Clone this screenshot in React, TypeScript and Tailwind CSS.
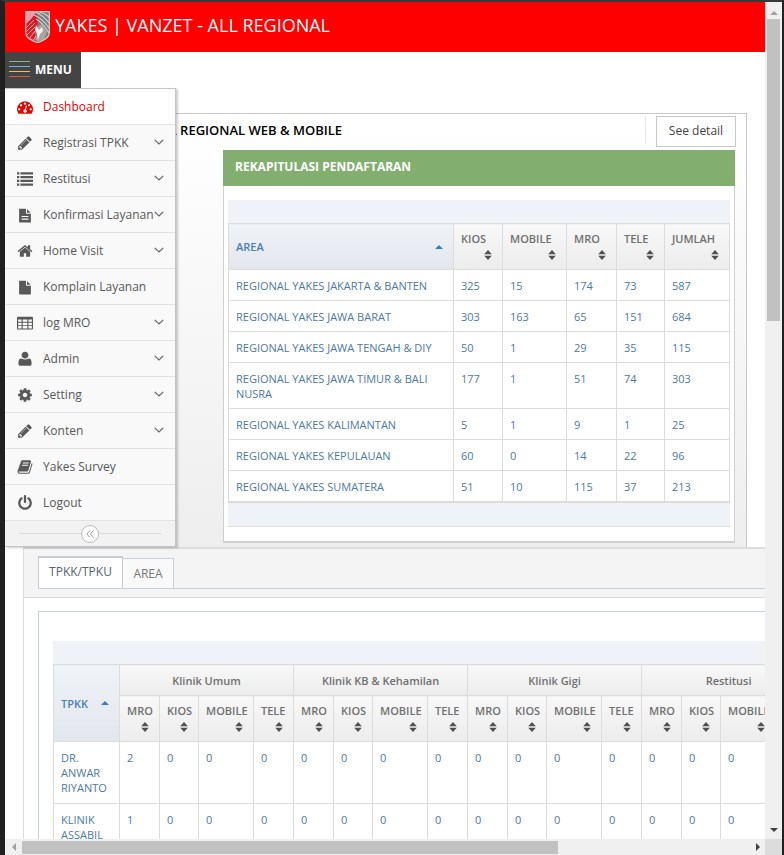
import React from 'react';

const FILE_PATH =
  'M1596 476q14 14 28 36h-472v-472q22 14 36 28zm-572 164h640v1056q0 40-28 68t-68 28h-1344q-40 0-68-28t-28-68v-1600q0-40 28-68t68-28h800v544q0 40 28 68t68 28z';

const ICONS: Record<string, React.ReactNode> = {
  dashboard: (
    <path d="M384 1152q0-53-37.5-90.5t-90.5-37.5-90.5 37.5-37.5 90.5 37.5 90.5 90.5 37.5 90.5-37.5 37.5-90.5zm192-448q0-53-37.5-90.5t-90.5-37.5-90.5 37.5-37.5 90.5 37.5 90.5 90.5 37.5 90.5-37.5 37.5-90.5zm428 481l101-382q6-26-7.5-48.5t-38.5-29.5-48 6.5-30 39.5l-101 382q-60 5-107 43.5t-63 98.5q-20 77 20 146t117 89 146-20 89-117q16-60-6-117t-72-91zm660-33q0-53-37.5-90.5t-90.5-37.5-90.5 37.5-37.5 90.5 37.5 90.5 90.5 37.5 90.5-37.5 37.5-90.5zm-640-640q0-53-37.5-90.5t-90.5-37.5-90.5 37.5-37.5 90.5 37.5 90.5 90.5 37.5 90.5-37.5 37.5-90.5zm448 192q0-53-37.5-90.5t-90.5-37.5-90.5 37.5-37.5 90.5 37.5 90.5 90.5 37.5 90.5-37.5 37.5-90.5zm320 448q0 261-141 483-19 29-54 29h-1402q-35 0-54-29-141-221-141-483 0-182 71-348t191-286 286-191 348-71 348 71 286 191 191 286 71 348z" />
  ),
  pencil: (
    <path d="M491 1536l91-91-235-235-91 91v107h128v128h107zm523-928q0-22-22-22-10 0-17 7l-542 542q-7 7-7 17 0 22 22 22 10 0 17-7l542-542q7-7 7-17zm-54-192l416 416-832 832h-416v-416zm683 96q0 53-37 90l-166 166-416-416 166-165q36-38 90-38 53 0 91 38l235 234q37 39 37 91z" />
  ),
  list: (
    <path d="M0 150h256v240h-256zM384 150h1408v240h-1408zM0 570h256v240h-256zM384 570h1408v240h-1408zM0 990h256v240h-256zM384 990h1408v240h-1408zM0 1410h256v240h-256zM384 1410h1408v240h-1408z" />
  ),
  fileText: (
    <path
      fillRule="evenodd"
      transform="translate(125 200) scale(.86)"
      d={FILE_PATH + 'M448 928h896v150h-896zM448 1264h896v150h-896z'}
    />
  ),
  home: (
    <path d="M1472 992v480q0 26-19 45t-45 19h-384v-384h-256v384h-384q-26 0-45-19t-19-45v-480q0-1 .5-3t.5-3l575-474 575 474q1 2 1 6zm223-69l-62 74q-8 9-21 11h-3q-13 0-21-7l-692-577-692 577q-12 8-24 7-13-2-21-11l-62-74q-8-10-7-23.5t11-21.5l719-599q32-26 76-26t76 26l244 204v-195q0-14 9-23t23-9h192q14 0 23 9t9 23v408l219 182q10 8 11 21.5t-7 23.5z" />
  ),
  file: <path transform="translate(125 200) scale(.86)" d={FILE_PATH} />,
  table: (
    <path
      fillRule="evenodd"
      d="M160 192h1472q80 0 120 40t40 120v1120q0 80-40 120t-120 40h-1472q-80 0-120-40t-40-120v-1120q0-80 40-120t120-40zM128 512v256h384v-256zM640 512v256h512v-256zM1280 512v256h384v-256zM128 864v256h384v-256zM640 864v256h512v-256zM1280 864v256h384v-256zM128 1216v288h384v-288zM640 1216v288h512v-288zM1280 1216v288h384v-288z"
    />
  ),
  user: (
    <path d="M1636 1399q0 109-62.500 187t-150.500 78h-1054q-88 0-150.500-78t-62.500-187q0-85 8.500-160.500t31.500-152 58.500-131 94-89 134.500-34.500q231 128 413 128t413-128q76 0 134.500 34.500t94 89 58.500 131 31.500 152 8.500 160.500zm-356-937q0 159-112.500 271.500t-271.500 112.500-271.500-112.500-112.500-271.500 112.500-271.500 271.500-112.500 271.500 112.500 112.500 271.500z" />
  ),
  cog: (
    <path d="M1152 896q0-106-75-181t-181-75-181 75-75 181 75 181 181 75 181-75 75-181zm512-109v222q0 12-8 23t-20 13l-185 28q-19 54-39 91 35 50 107 138 10 12 10 25t-9 23q-27 37-99 108t-94 71q-12 0-26-9l-138-108q-44 23-91 38-16 136-29 186-7 28-36 28h-222q-14 0-24.5-8.5t-11.5-21.5l-28-184q-49-16-90-37l-141 107q-10 9-25 9-14 0-25-11-126-114-165-168-7-10-7-23 0-12 8-23 15-21 51-66.5t54-70.5q-27-50-41-99l-183-27q-13-2-21-12.5t-8-23.5v-222q0-12 8-23t19-13l186-28q14-46 39-92-40-57-107-138-10-12-10-24 0-10 9-23 26-36 98.5-107.5t94.5-71.5q13 0 26 10l138 107q44-23 91-38 16-136 29-186 7-28 36-28h222q14 0 24.5 8.5t11.5 21.5l28 184q49 16 90 37l142-107q9-9 24-9 13 0 25 10 129 119 165 170 7 8 7 22 0 12-8 23-15 21-51 66.5t-54 70.5q26 50 41 98l183 28q13 2 21 12.5t8 23.5z" />
  ),
  book: (
    <path d="M1703 478q40 57 18 129l-275 906q-19 64-76.5 107.5t-122.5 43.5h-923q-77 0-148.5-53.5t-99.5-131.5q-24-67-2-127 0-4 3-27t4-37q1-8-3-21.5t-3-19.5q2-11 8-21t16.5-23.5 16.5-23.5q23-38 45-91.5t30-91.5q3-10 .5-30t-.5-28q3-11 17-28t17-23q21-36 42-92t25-90q1-9-2.5-32t.5-28q4-13 22-30.5t22-22.5q19-26 42.5-84.5t27.5-96.5q1-8-3-25.5t-2-26.5q2-8 9-18t18-23 17-21q8-12 16.5-30.5t15-35 16-36 19.5-32 26.5-23.5 36-11.5 47.5 5.5l-1 3q38-9 51-9h761q74 0 114 56t18 130l-274 906q-36 119-71.5 153.5t-128.5 34.5h-869q-27 0-38 15-11 16-1 43 24 70 144 70h923q29 0 56-15.5t35-41.5l300-987q7-22 5-57 38 15 59 43zm-1064 2q-4 13 2 22.5t20 9.5h608q13 0 25.5-9.5t16.5-22.5l21-64q4-13-2-22.5t-20-9.5h-608q-13 0-25.5 9.5t-16.5 22.5zm-83 256q-4 13 2 22.5t20 9.5h608q13 0 25.5-9.5t16.5-22.5l21-64q4-13-2-22.5t-20-9.5h-608q-13 0-25.5 9.5t-16.5 22.5z" />
  ),
  power: (
    <path d="M1664 896q0 156-61 298t-164 245-245 164-298 61-298-61-245-164-164-245-61-298q0-182 80.5-343t226.5-270q43-32 95.5-25t83.5 50q32 42 24.5 94.5t-49.5 84.5q-98 74-151.5 181t-53.5 228q0 104 40.5 198.5t109.5 163.5 163.5 109.5 198.5 40.5 198.5-40.5 163.5-109.5 109.5-163.5 40.5-198.5q0-121-53.5-228t-151.5-181q-42-32-49.5-84.5t24.5-94.5q31-43 84-50t95 25q146 109 226.5 270t80.5 343zm-640-768v640q0 52-38 90t-90 38-90-38-38-90v-640q0-52 38-90t90-38 90 38 38 90z" />
  ),
};

const MENU = [
  { icon: 'dashboard', label: 'Dashboard', sub: false },
  { icon: 'pencil', label: 'Registrasi TPKK', sub: true },
  { icon: 'list', label: 'Restitusi', sub: true },
  { icon: 'fileText', label: 'Konfirmasi Layanan', sub: true },
  { icon: 'home', label: 'Home Visit', sub: true },
  { icon: 'file', label: 'Komplain Layanan', sub: false },
  { icon: 'table', label: 'log MRO', sub: true },
  { icon: 'user', label: 'Admin', sub: true },
  { icon: 'cog', label: 'Setting', sub: true },
  { icon: 'pencil', label: 'Konten', sub: true },
  { icon: 'book', label: 'Yakes Survey', sub: false },
  { icon: 'power', label: 'Logout', sub: false },
];

const AREA_ROWS: [string, number[]][] = [
  ['REGIONAL YAKES JAKARTA & BANTEN', [325, 15, 174, 73, 587]],
  ['REGIONAL YAKES JAWA BARAT', [303, 163, 65, 151, 684]],
  ['REGIONAL YAKES JAWA TENGAH & DIY', [50, 1, 29, 35, 115]],
  ['REGIONAL YAKES JAWA TIMUR & BALI NUSRA', [177, 1, 51, 74, 303]],
  ['REGIONAL YAKES KALIMANTAN', [5, 1, 9, 1, 25]],
  ['REGIONAL YAKES KEPULAUAN', [60, 0, 14, 22, 96]],
  ['REGIONAL YAKES SUMATERA', [51, 10, 115, 37, 213]],
];

const GROUPS = ['Klinik Umum', 'Klinik KB & Kehamilan', 'Klinik Gigi', 'Restitusi'];
const CHANNELS = ['MRO', 'KIOS', 'MOBILE', 'TELE'];
const CLINIC_ROWS = [
  { name: 'DR. ANWAR RIYANTO', first: 2 },
  { name: 'KLINIK ASSABIL', first: 1 },
];

const TH = 'border border-[#dcdcdc] bg-linear-to-b from-[#f8f8f8] to-[#ececec] px-[7px] text-left font-semibold text-[#707070]';
const TH_ACTIVE = 'border border-[#dcdcdc] bg-linear-to-b from-[#eff3f8] to-[#e3e7ed] px-[7px] text-left font-semibold text-[#4a7ebb]';
const TD = 'border border-[#dcdcdc] px-[7px] pt-2 pb-[7px] align-top text-[#4c7a9f]';

function SortIcon() {
  return (
    <svg viewBox="0 0 8 10" className="mr-[3px] ml-auto h-[10px] w-2 fill-[#505050]" aria-hidden="true">
      <path d="M4 0 7.8 4.2H.2zM.2 5.8h7.6L4 10z" />
    </svg>
  );
}

function CaretUp() {
  return (
    <svg viewBox="0 0 8 4" className="h-1 w-2 fill-[#307ecc]" aria-hidden="true">
      <path d="M4 0 8 4H0z" />
    </svg>
  );
}

function SortHeader({ label }: { label: string }) {
  return (
    <th className={TH + ' h-[46px]'}>
      <div className="leading-4">{label}</div>
      <div className="flex h-[15px] items-center">
        <SortIcon />
      </div>
    </th>
  );
}

function Shield() {
  return (
    <svg viewBox="0 0 25 32" className="h-8 w-[25px]" aria-hidden="true">
      <clipPath id="shield">
        <path d="M.5.5h24v21c0 5-5 7-9 9l-3 1.500-3-1.500c-4-2-9-4-9-9z" />
      </clipPath>
      <g clipPath="url(#shield)">
        <path fill="#7d7d7d" d="M0 0h25v32H0z" />
        <path fill="#ee9aae" d="M0 0h11L8 7 0 14z" />
        <path fill="#e01822" d="M0 14 6 8l5-6 2 7-1 8-2 5 1 8-11-5z" />
        <g fill="none" stroke="#f3b4b4" strokeWidth="1">
          <path d="M1 17 9 9M1 21l9-9M1 25l9-9M4 28l6-8M8 30l3-5" />
        </g>
        <g fill="none" stroke="#d0d0d0" strokeWidth="1.200">
          <path d="M10 1q8 3 14 11M9 4q9 4 15 13M14 1q6 1 11 6M11 8q7 4 13 14" />
        </g>
        <path fill="#a8a4a2" d="M13 15l4-2 5 8-3 7-6 3-3-2 3-7z" />
        <path fill="#f6eeee" d="M11 14l3 5 3-3 1 4-3 3-2 6-1-6-2-4z" />
      </g>
      <path
        d="M.7.700h23.600v21c0 5-5 7-9 9l-2.800 1-2.800-1c-4-2-9-4-9-9z"
        fill="none"
        stroke="#e9c6c6"
        strokeWidth="1.200"
      />
    </svg>
  );
}

function SideMenu() {
  return (
    <nav
      aria-label="Menu"
      className="absolute top-9 left-0 z-10 w-[171px] border-t border-r border-b border-[#c4c4c4] bg-[#f2f2f2] shadow-[2px_1px_2px_rgba(0,0,0,0.2)]"
    >
      <ul>
        {MENU.map((item, i) => (
          <li key={item.label}>
            <a
              href="#"
              className={
                i === 0
                  ? 'flex h-9 items-center border-b border-[#e2e2e2] bg-white pl-3 text-[#e80000]'
                  : 'flex h-9 items-center border-b border-[#e2e2e2] bg-[#f9f9f9] pl-3 text-[#585858]'
              }
            >
              <svg viewBox="0 0 1792 1792" className="mr-[10px] h-4 w-4 shrink-0 fill-current" aria-hidden="true">
                {ICONS[item.icon]}
              </svg>
              <span className="grow text-[12px] whitespace-nowrap">{item.label}</span>
              {item.sub && (
                <svg viewBox="0 0 10 6" className="mr-[11px] mb-[2px] h-[6px] w-[10px] shrink-0" aria-hidden="true">
                  <path d="M.8.800 5 5 9.200.800" fill="none" stroke="#666" strokeWidth="1.200" />
                </svg>
              )}
            </a>
          </li>
        ))}
      </ul>
      <div className="flex h-[25px] items-center px-[14px]">
        <span className="h-px grow bg-[#dcdcdc]" />
        <button
          type="button"
          aria-label="Collapse menu"
          className="flex h-[18px] w-[18px] items-center justify-center rounded-full border border-[#bbb] bg-white"
        >
          <svg viewBox="0 0 8 8" className="h-2 w-2" aria-hidden="true">
            <path d="M4 .5.800 4 4 7.500M7.500.5 4.300 4l3.200 3.500" fill="none" stroke="#999" />
          </svg>
        </button>
        <span className="h-px grow bg-[#dcdcdc]" />
      </div>
    </nav>
  );
}

function AreaTable() {
  return (
    <table className="w-full table-fixed border-collapse text-[11px] leading-[15px]">
      <colgroup>
        <col />
        <col className="w-[49px]" />
        <col className="w-[64px]" />
        <col className="w-[50px]" />
        <col className="w-[48px]" />
        <col className="w-[65px]" />
      </colgroup>
      <thead>
        <tr>
          <th className={TH_ACTIVE}>
            <div className="flex items-center justify-between pr-[3px]">
              AREA <CaretUp />
            </div>
          </th>
          {['KIOS', 'MOBILE', 'MRO', 'TELE', 'JUMLAH'].map((h) => (
            <SortHeader key={h} label={h} />
          ))}
        </tr>
      </thead>
      <tbody>
        {AREA_ROWS.map(([name, values]) => (
          <tr key={name}>
            <td className={TD}>{name}</td>
            {values.map((v, i) => (
              <td key={i} className={TD}>
                {v}
              </td>
            ))}
          </tr>
        ))}
      </tbody>
    </table>
  );
}

function ClinicTable() {
  return (
    <table className="w-[762px] table-fixed border-collapse text-[11px] leading-[15px]">
      <colgroup>
        <col className="w-[66px]" />
        {GROUPS.map((g) => (
          <React.Fragment key={g}>
            <col className="w-[40px]" />
            <col className="w-[39px]" />
            <col className="w-[55px]" />
            <col className="w-[40px]" />
          </React.Fragment>
        ))}
      </colgroup>
      <thead>
        <tr>
          <th rowSpan={2} className={TH_ACTIVE}>
            <div className="flex items-center justify-between pr-[3px]">
              TPKK <CaretUp />
            </div>
          </th>
          {GROUPS.map((g) => (
            <th key={g} colSpan={4} className={TH + ' h-[31px]'}>
              <div className="text-center">{g}</div>
            </th>
          ))}
        </tr>
        <tr>
          {GROUPS.map((g) => CHANNELS.map((c) => <SortHeader key={g + c} label={c} />))}
        </tr>
      </thead>
      <tbody>
        {CLINIC_ROWS.map((row) => (
          <tr key={row.name} className="h-[62px]">
            <td className={TD}>{row.name}</td>
            {GROUPS.map((g, gi) =>
              CHANNELS.map((c, ci) => (
                <td key={g + c} className={TD}>
                  {gi === 0 && ci === 0 ? row.first : 0}
                </td>
              )),
            )}
          </tr>
        ))}
      </tbody>
    </table>
  );
}

function Arrow({ d, fill }: { d: string; fill: string }) {
  return (
    <svg viewBox="0 0 8 8" className="h-2 w-2 shrink-0" aria-hidden="true">
      <path d={d} fill={fill} />
    </svg>
  );
}

export default function App() {
  return (
    <div className="flex h-screen flex-col overflow-hidden border-t-2 border-r-2 border-l-5 border-t-[#383838] border-r-[#202020] border-l-[#202020] bg-white font-['Open_Sans',sans-serif]">
      <div className="flex min-h-0 grow">
        <div className="min-w-0 grow overflow-hidden">
          <header className="flex h-[50px] items-center bg-[#ff0000] pl-5 text-white">
            <Shield />
            <h1 className="ml-[5px] pb-1 text-[18px] whitespace-nowrap">YAKES | VANZET - ALL REGIONAL</h1>
          </header>

          <div className="relative">
            <button
              type="button"
              className="flex h-9 w-[76px] items-center bg-[#444] pl-1 text-[12px] font-bold text-white"
            >
              <span className="mr-[5px] mb-[2px] flex w-[21px] flex-col gap-1">
                <span className="h-px bg-[#87b87f]" />
                <span className="h-px bg-[#6fb3e0]" />
                <span className="h-px bg-[#ffb752]" />
                <span className="h-px bg-[#d15b47]" />
              </span>
              MENU
            </button>
            <SideMenu />

            <main className="pt-[25px] pl-[18px]">
              <section className="mr-[18px] border border-b-0 border-[#c8c8c8] bg-linear-to-b from-white to-[#eeeeee] pb-1">
                <div className="flex h-9 items-start justify-end">
                  <h2 className="mt-[7px] grow pl-[130px] text-[13px] leading-[18px] font-semibold text-black">
                    ALL REGIONAL WEB &amp; MOBILE
                  </h2>
                  <span className="mt-[2px] mr-[10px] h-7 w-px bg-[#e6e6e6]" />
                  <button
                    type="button"
                    className="mt-[2px] mr-[10px] h-[31px] w-20 border border-[#c8c8c8] bg-white pb-[2px] text-[12px] text-[#444]"
                  >
                    See detail
                  </button>
                </div>
                <div className="mr-[11px] ml-auto w-[512px] border border-t-0 border-b-2 border-[#cfcfcf] bg-white">
                  <h3 className="-mx-px flex h-9 items-center bg-[#82af6f] px-3 pb-[2px] text-[12px] font-bold text-white">
                    REKAPITULASI PENDAFTARAN
                  </h3>
                  <div className="mx-1 mt-[14px] h-[23px] bg-[#eff3f8]" />
                  <div className="mx-1">
                    <AreaTable />
                  </div>
                  <div className="mx-1 mb-[14px] h-[25px] border-t border-b border-[#dcdcdc] bg-[#eff3f8]" />
                </div>
              </section>

              <section className="border-t-2 border-l border-[#dcdcdc] bg-white">
                <div className="border-b border-[#dcdcdc] bg-[#f4f4f4] pb-2 pl-[14px]">
                  <div role="tablist" className="flex h-10 items-end border-b border-[#c5d0dc]">
                    <button
                      type="button"
                      role="tab"
                      aria-selected="true"
                      className="h-8 w-[85px] border-x border-t-2 border-[#c9cdd2] bg-white pb-[2px] text-[12px] text-[#576373]"
                    >
                      TPKK/TPKU
                    </button>
                    <button
                      type="button"
                      role="tab"
                      aria-selected="false"
                      className="h-[30px] w-[51px] border-t border-r border-[#c5d0dc] bg-[#f9f9f9] text-[12px] text-[#777]"
                    >
                      AREA
                    </button>
                  </div>
                </div>
                <div className="mt-[13px] ml-[14px] border-t border-l border-[#c5d0dc] pt-[29px] pl-[14px]">
                  <div className="h-[23px] bg-[#eff3f8]" />
                  <ClinicTable />
                </div>
              </section>
            </main>
          </div>
        </div>

        <div className="flex w-[17px] shrink-0 flex-col items-center bg-[#f0f0f0] pt-1 pb-[5px]" aria-hidden="true">
          <div className="flex h-[13px] items-center">
            <Arrow d="M4 2 8 6H0z" fill="#a0a0a0" />
          </div>
          <div className="h-[302px] w-[13px] bg-[#c1c1c1]" />
          <div className="mt-auto flex">
            <Arrow d="M0 2h8L4 6z" fill="#404040" />
          </div>
        </div>
      </div>

      <div className="flex h-4 shrink-0 items-center bg-[#f0f0f0]" aria-hidden="true">
        <div className="flex w-[17px] justify-center">
          <Arrow d="M6 0v8L2 4z" fill="#a0a0a0" />
        </div>
        <div className="h-[13px] w-[69%] bg-[#c1c1c1]" />
        <div className="mr-[3px] ml-auto flex">
          <Arrow d="M2 0v8l4-4z" fill="#404040" />
        </div>
        <div className="h-4 w-[17px] bg-[#dcdcdc]" />
      </div>
    </div>
  );
}
